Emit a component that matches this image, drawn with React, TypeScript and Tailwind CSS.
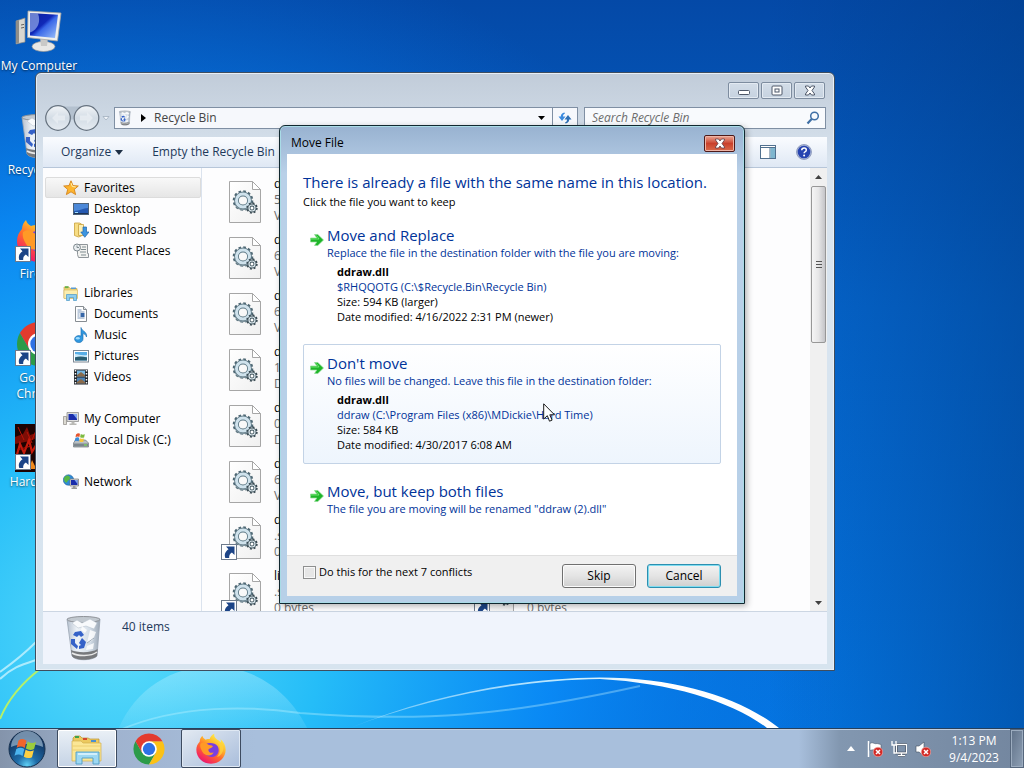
import type { ReactNode } from "react"

interface IconProps {
  className?: string
}

interface FileItem {
  name: string
  info: string
  detail: string
  shortcut?: boolean
  className: string
}

interface NavItem {
  label: string
  icon: ReactNode
}

interface NavGroup extends NavItem {
  active?: boolean
  items: NavItem[]
}

/* ---------- Icons ---------- */

function ComputerIcon({ className }: IconProps) {
  return (
    <svg viewBox="0 0 48 48" className={className} aria-hidden="true">
      <defs>
        <linearGradient id="pc-screen" x1="0" y1="0" x2="1" y2="1">
          <stop offset="0" stopColor="#0a1f9c" />
          <stop offset=".45" stopColor="#1028b8" />
          <stop offset=".55" stopColor="#3a68e8" />
          <stop offset="1" stopColor="#9fc4fb" />
        </linearGradient>
      </defs>
      <path d="M1 13l9-3v24l-9 2z" fill="#d9d7d0" stroke="#8d8b86" strokeWidth=".7" />
      <path d="M1 13l3-.8v22.600l-3 .8z" fill="#8f8d88" />
      <path d="M6 17l3-.6M6 20l3-.6" stroke="#66645f" />
      <ellipse cx="28.500" cy="38.500" rx="11.500" ry="5" fill="#e8e8e6" stroke="#9a9a98" strokeWidth=".7" />
      <path d="M25 29h8l-1 9h-6z" fill="#c9c9c7" />
      <path d="M13 3l33 2-3.500 28-30-3.500z" fill="#efefed" stroke="#a5a5a3" strokeWidth=".8" />
      <path d="M15 5l28 1.700-3 23.300-25-2.500z" fill="url(#pc-screen)" />
      <path d="M15 5l8 .5c3 8 0 16-8 19z" fill="#b8cdf8" opacity=".55" />
    </svg>
  )
}

function RecycleIcon({ className }: IconProps) {
  return (
    <svg viewBox="0 0 48 48" className={className} aria-hidden="true">
      <defs>
        <linearGradient id="bin-glass" x1="0" y1="0" x2="1" y2="0">
          <stop offset="0" stopColor="#b6c1cf" />
          <stop offset=".3" stopColor="#eef3f8" />
          <stop offset=".7" stopColor="#d3dde7" />
          <stop offset="1" stopColor="#9aa6b4" />
        </linearGradient>
      </defs>
      <path d="M7 5l5 37c3 5 20 5 25 0l3-37z" fill="url(#bin-glass)" stroke="#99a5b2" strokeWidth=".8" />
      <path d="M11 36l1 6c3 5 20 5 25 0l.6-7c-6 4-20 4-26.600 1z" fill="#77797c" />
      <path d="M12 39c6 3.500 19 3.500 25-1" stroke="#e8e8e8" strokeWidth="1.500" fill="none" />
      <ellipse cx="23.500" cy="5.500" rx="16.500" ry="3" fill="#c2c9d0" stroke="#8e9298" />
      <path d="M12 9l5-3 5 3 8-4 7 4-3 6-8-3-8 2z" fill="#f8fafc" stroke="#b1bcc8" strokeWidth=".5" />
      <path d="M30 16l6 2-3 8-6 3zM27 32l7-3-1 6-7 1zM22 12l5 4-2 3-4-3z" fill="#fff" opacity=".8" />
      <path d="M27 29l7-5" stroke="#8d9aaa" strokeWidth=".8" />
      <g fill="#3562c8">
        <path d="M15 18l6-1 3 4-3 2-2-2-2 2-4-2z" />
        <path d="M11 25l4 0v4l3 3-1 3-6-5z" />
        <path d="M22 24l4 4-2 6-5 1v-3l2-1-2-2z" />
      </g>
    </svg>
  )
}

function FirefoxIcon({ className }: IconProps) {
  return (
    <svg viewBox="0 0 48 48" className={className} aria-hidden="true">
      <defs>
        <linearGradient id="fox-body" x1=".8" y1=".1" x2=".2" y2="1">
          <stop offset="0" stopColor="#fff04a" />
          <stop offset=".3" stopColor="#ffb52a" />
          <stop offset=".55" stopColor="#ff6a2c" />
          <stop offset=".85" stopColor="#f5285f" />
          <stop offset="1" stopColor="#d3167a" />
        </linearGradient>
      </defs>
      <path
        d="M7 13c0-4 2-7 4-9 1 3 2 4 5 6 2-1 4-1 6-1 1-4 4-7 7-8-1 5 2 7 6 10 2 1 3 3 3 4 1-2 1-4 0-6 5 4 8 10 8 16 0 12-10 21-22 21S2 37 2 25c0-5 2-9 5-12z"
        fill="url(#fox-body)"
      />
      <path d="M16 17c4-3 14-3 18 3 4 7 0 16-9 16-7 0-11-5-11-10 0-4 1-7 2-9z" fill="#7a3fe0" />
      <path d="M8 16c4-3 8-2 11 1 2 2 6 1 8 3-2 3-6 3-7 5 0 4 4 6 8 4-3 7-13 6-17-1-2-4-4-7-3-12z" fill="#ff9a26" />
      <path d="M34 14c5 6 5 16-1 22 8-3 12-12 8-20-2-2-5-3-7-2z" fill="#ffd23c" opacity=".8" />
    </svg>
  )
}

function ChromeIcon({ className }: IconProps) {
  return (
    <svg viewBox="0 0 48 48" className={className} aria-hidden="true">
      <path d="M4.950 13A22 22 0 0 0 24 46L33.500 29.500 24 24 14.500 29.500z" fill="#2c9b48" />
      <path d="M43.050 13A22 22 0 0 1 24 46L33.500 29.500 24 13z" fill="#fbc116" />
      <path d="M24 13H43.050A22 22 0 0 0 4.950 13L14.500 29.500z" fill="#e33b2e" />
      <circle cx="24" cy="24" r="11" fill="#fff" />
      <circle cx="24" cy="24" r="8.700" fill="#2e71e5" />
    </svg>
  )
}

function HardTimeIcon({ className }: IconProps) {
  return (
    <svg viewBox="0 0 48 48" className={className} aria-hidden="true">
      <rect width="48" height="48" fill="#1d0302" />
      <path d="M0 13l8-3 4-7 3 8 9-3 8 4 16-6v8l-14 3-10-4-9 4-15 3z" fill="#7d0d05" />
      <path d="M1 34l4-14 4 9 5-13 3 12 6-10 4 13 6-15 5 14 8-9" stroke="#c41a0c" strokeWidth="2.200" fill="none" />
      <path d="M3 3l6 13M12 8l5 11M22 4l-5 12M2 26l14-4" stroke="#b81408" strokeWidth="1" />
      <path d="M14 45l3-9 3 6 3-9 4 10 4-7 3 9z" fill="#f08a1c" />
    </svg>
  )
}

function ShortcutArrow({ className }: IconProps) {
  return (
    <svg viewBox="0 0 16 16" className={className} aria-hidden="true">
      <rect x=".5" y=".5" width="15" height="15" fill="#fff" stroke="#6d7a8c" />
      <path d="M5 2.500h8.500V11l-2.600-2.400C8.800 10 8 11.500 8.200 14H4.300C3 10 4.500 7.500 7.500 5.300z" fill="#1c4487" />
    </svg>
  )
}

function DllIcon({ className }: IconProps) {
  return (
    <svg viewBox="0 0 48 48" className={className} aria-hidden="true">
      <defs>
        <linearGradient id="dll-page" x1="0" y1="0" x2="1" y2="1">
          <stop offset="0" stopColor="#fff" />
          <stop offset="1" stopColor="#f0f0f0" />
        </linearGradient>
      </defs>
      <path d="M8.500 3.500h23l8 8v33h-31z" fill="url(#dll-page)" stroke="#a6a6a6" />
      <path d="M31.500 3.500v8h8z" fill="#fff" stroke="#a6a6a6" />
      <circle cx="22" cy="22.500" r="8.800" fill="none" stroke="#4d6672" strokeWidth="3" strokeDasharray="2.500 2.110" />
      <circle cx="22" cy="22.500" r="6.500" fill="none" stroke="#5d7885" strokeWidth="4.800" />
      <circle cx="22" cy="22.500" r="6.500" fill="none" stroke="#cfe2ec" strokeWidth="3" />
      <path d="M14.500 27c3 6 12 6 15 0" stroke="#7d929c" strokeWidth="1.500" fill="none" />
      <circle cx="31" cy="30" r="4.600" fill="none" stroke="#37474f" strokeWidth="2.200" strokeDasharray="1.800 1.810" />
      <circle cx="31" cy="30" r="3" fill="#fff" stroke="#455962" strokeWidth="3" />
      <circle cx="31" cy="30" r="3" fill="none" stroke="#dbe7ec" strokeWidth="1.200" />
    </svg>
  )
}

function StarIcon() {
  return (
    <svg viewBox="0 0 16 16" className="size-4" aria-hidden="true">
      <path d="M8 .8l2 4.800 5.300.4-4 3.400 1.300 5.200L8 11.800l-4.600 2.800 1.300-5.200-4-3.400L6 5.600z" fill="#fdb52f" stroke="#d5831a" strokeWidth=".9" />
      <path d="M8 3l1.300 3.500 3.500.5" stroke="#fff1b0" strokeWidth="1" fill="none" />
    </svg>
  )
}

function DesktopIcon() {
  return (
    <svg viewBox="0 0 16 16" className="size-4" aria-hidden="true">
      <rect x=".5" y="2.500" width="15" height="11" fill="#2458b0" stroke="#4c6178" />
      <path d="M1 3h14v4c-5 0-8 3-14 3z" fill="#4c88d8" />
      <path d="M1 12h14v1H1z" fill="#1d3354" />
      <path d="M2 11.500h3" stroke="#9fe0ff" />
    </svg>
  )
}

function DownloadsIcon() {
  return (
    <svg viewBox="0 0 16 16" className="size-4" aria-hidden="true">
      <path d="M1.500 1h5l2 1v12l-3 1-4-1.500z" fill="#f7dd84" stroke="#c9a13e" strokeWidth=".8" />
      <path d="M5.500 2.500h5v11h-5z" fill="#fcefb4" stroke="#c9a13e" strokeWidth=".8" />
      <path d="M10 5h3.500v5H16l-4.200 5.300L7.800 10H10z" fill="#3d95e0" stroke="#1f65ae" strokeWidth=".7" />
    </svg>
  )
}

function RecentIcon() {
  return (
    <svg viewBox="0 0 16 16" className="size-4" aria-hidden="true">
      <path d="M4.500 1.500h10v9h1v4H5.500l-1-3z" fill="#f2f2f0" stroke="#8f959a" />
      <circle cx="4" cy="4.500" r="3.500" fill="#e9edf0" stroke="#7f898f" />
      <path d="M4 2.500v2h2M9 4h4M8 6.500h5M7 9h6M8 12h5" stroke="#7e8b90" fill="none" />
    </svg>
  )
}

function LibrariesIcon() {
  return (
    <svg viewBox="0 0 16 16" className="size-4" aria-hidden="true">
      <path d="M1 2h5l1 1.500h7V13H1z" fill="#f3d77a" stroke="#c2a044" strokeWidth=".6" />
      <path d="M2 1.200h3.500v2H2z" fill="#67b04a" />
      <path d="M8 2.500h5v1.500H8z" fill="#5a9ad2" />
      <path d="M1 5h13.500v8.500H1z" fill="#fceeaf" stroke="#d2b45c" strokeWidth=".6" />
      <path d="M3.500 15.500v-6h10v6h-3v-3h-4v3z" fill="#8ccdf0" stroke="#4a98c6" strokeWidth=".7" />
    </svg>
  )
}

function DocumentsIcon() {
  return (
    <svg viewBox="0 0 16 16" className="size-4" aria-hidden="true">
      <path d="M2.500.5h8l3 3v12h-11z" fill="#fff" stroke="#868c92" />
      <path d="M10.500.5v3h3" fill="#dfe4e8" stroke="#868c92" />
      <path d="M4.500 4h4M4.500 6h7M4.500 8h2M4.500 10h2M4.500 12h7" stroke="#7c97ba" />
      <rect x="7.500" y="7" width="4" height="4" fill="#3767a8" />
    </svg>
  )
}

function MusicIcon() {
  return (
    <svg viewBox="0 0 16 16" className="size-4" aria-hidden="true">
      <path d="M8 .5c.5 3.500 6.500 4 5.500 9.500-.6-2-2-3.200-3.500-3.400V12A4.200 3.500 0 1 1 8 9.100z" fill="#2f97df" stroke="#1a69ad" strokeWidth=".6" />
      <ellipse cx="4.800" cy="11.300" rx="2" ry="1.200" fill="#9fdcff" />
    </svg>
  )
}

function PicturesIcon() {
  return (
    <svg viewBox="0 0 16 16" className="size-4" aria-hidden="true">
      <rect x=".5" y="2.500" width="15" height="11.500" fill="#fff" stroke="#7c8894" />
      <path d="M2 4h12v8.500H2z" fill="#58aee6" />
      <path d="M2 6c4 0 6 2 12 1v2H2z" fill="#c9eafb" />
      <path d="M2 9.500c4-1.500 8-1 12 0v3H2z" fill="#2a5d70" />
    </svg>
  )
}

function VideosIcon() {
  return (
    <svg viewBox="0 0 16 16" className="size-4" aria-hidden="true">
      <rect x="1" y=".5" width="14" height="15" fill="#20252b" />
      <path d="M4 1.500h8v6H4z" fill="#76b7e2" />
      <path d="M4 8.500h8v6H4z" fill="#4d82b4" />
      <path d="M4 6l4-3 4 3v1.500H4zM4 13l4-3 4 3v1.500H4z" fill="#8a6a4a" />
      <path d="M2.500 1v14M13.500 1v14" stroke="#f3f6f8" strokeWidth="1.500" strokeDasharray="1.500 1.500" />
    </svg>
  )
}

function SmallComputerIcon() {
  return (
    <svg viewBox="0 0 16 16" className="size-4" aria-hidden="true">
      <path d="M.5 5.500h3v8h-3z" fill="#dcdad2" stroke="#8c8a84" strokeWidth=".7" />
      <path d="M4 1.500h11.500v9H4z" fill="#ddd" stroke="#8d8d8d" strokeWidth=".8" />
      <path d="M5.500 3h8.500v6H5.500z" fill="#1a2dab" />
      <path d="M10 3h4v5z" fill="#7ea4ef" />
      <path d="M8.500 10.500h3v2h2v1.500h-7v-1.500h2z" fill="#b9b9b5" />
    </svg>
  )
}

function DiskIcon() {
  return (
    <svg viewBox="0 0 16 16" className="size-4" aria-hidden="true">
      <path d="M.5 11l2-3h10l3 3v4H.5z" fill="#b9bfc3" stroke="#6f777c" strokeWidth=".7" />
      <path d="M1 11.500h14v3H1z" fill="#7c868c" />
      <path d="M11 13h3" stroke="#7cf04e" />
      <path d="M3 2.500Q5 .5 7 1.700L6.400 5Q4.500 4 2.500 5.300z" fill="#e5532c" />
      <path d="M7.800 2q2 1.200 4 .2l-.7 3.300q-2 .8-4-.3z" fill="#7cba3f" />
      <path d="M2.400 6q2-1.300 3.900-.2l-.7 3.400q-2-1-4 0z" fill="#3a8bd8" />
      <path d="M7.100 6.200q2 1.100 3.900.2l-.7 3.300q-2 .9-3.900-.2z" fill="#f9c63a" />
    </svg>
  )
}

function NetworkIcon() {
  return (
    <svg viewBox="0 0 16 16" className="size-4" aria-hidden="true">
      <circle cx="5.500" cy="6" r="5.200" fill="#2f8bd6" stroke="#1d5d9c" strokeWidth=".6" />
      <path d="M3 2c2-1 4 0 4 2S5 6 4 8 1 7 1 5s1-2.500 2-3z" fill="#57b845" />
      <path d="M7 5h8.500v7H7z" fill="#d8d8d8" stroke="#777" strokeWidth=".7" />
      <path d="M8 6h6.500v5H8z" fill="#1a2dab" />
      <path d="M11.500 6h3v4z" fill="#7ea4ef" />
      <path d="M10 12h2.500v1.500H14V15H8.500v-1.500H10z" fill="#9a9a98" />
    </svg>
  )
}

function GreenArrow() {
  return (
    <svg viewBox="0 0 14 14" className="mt-2 size-3.5 shrink-0" aria-hidden="true">
      <path d="M.5 5h6.300L4.500 1.500h3.300L13.500 7l-5.700 5.500H4.500L6.800 9H.5z" fill="#1fb52a" stroke="#8fdc93" strokeWidth=".7" />
      <path d="M1 6h8l-2.500-3.500" stroke="#7ff07f" strokeWidth=".8" fill="none" />
    </svg>
  )
}

function FolderStack() {
  return (
    <svg viewBox="0 0 32 32" className="size-8" aria-hidden="true">
      <path d="M2 5l2-2h5l2 2h6l2 1h9v21H2z" fill="#ecc95f" stroke="#bb9430" strokeWidth=".7" />
      <path d="M4 3h4v2H4z" fill="#3fa24a" />
      <path d="M12 5h4v2h-4z" fill="#d5482f" />
      <path d="M20 7h5v2h-5z" fill="#4a8fd0" />
      <path d="M1 8h9l2 2h18v18H1z" fill="#fbe796" stroke="#d3b04e" strokeWidth=".7" />
      <path d="M1 13h29M1 17h29" stroke="#eccf70" />
      <path d="M5 31V19h23v12h-6v-6H11v6z" fill="#9dd8f3" stroke="#4e9cc4" strokeWidth=".9" />
      <path d="M7 21h19" stroke="#e4f7ff" strokeWidth="1.500" />
    </svg>
  )
}

function StartOrb() {
  return (
    <svg viewBox="0 0 40 40" className="size-10" aria-hidden="true">
      <defs>
        <radialGradient id="orb" cx=".5" cy=".95" r=".8">
          <stop offset="0" stopColor="#5fd0f5" />
          <stop offset=".35" stopColor="#1e6ca8" />
          <stop offset="1" stopColor="#10305c" />
        </radialGradient>
      </defs>
      <circle cx="20" cy="20" r="18" fill="url(#orb)" stroke="#16304e" />
      <path d="M4 18a16 16 0 0 1 32 0c-8-4-24-4-32 0z" fill="#c3dcec" opacity=".55" />
      <path d="M11.500 11.500q4.200-3 8 .2l-1.800 7.300q-3.700-2.800-8-.3z" fill="#f0642c" />
      <path d="M20.700 12.400q4 2.800 8.300.5l-1.900 7q-4.200 2.200-8.200-.5z" fill="#9bcc3c" />
      <path d="M9.300 20q4-2.600 8-.1l-1.800 7q-3.900-2.500-8-.1z" fill="#4cb4ee" />
      <path d="M18.600 20.700q3.900 2.600 8.200.5l-1.800 7q-4.300 2-8.200-.5z" fill="#fdd043" />
    </svg>
  )
}

function RedBadge() {
  return (
    <>
      <circle cx="11" cy="11" r="4.800" fill="#d32a26" stroke="#f6b9b5" strokeWidth=".6" />
      <path d="M9 9l4 4m0-4l-4 4" stroke="#fff" strokeWidth="1.500" />
    </>
  )
}

function Wallpaper() {
  return (
    <svg
      viewBox="0 0 1024 768"
      preserveAspectRatio="none"
      className="absolute inset-0 size-full"
      aria-hidden="true"
    >
      <defs>
        <linearGradient id="sky" x1="0" y1="0" x2="0" y2="1">
          <stop offset="0" stopColor="#0449a7" />
          <stop offset=".4" stopColor="#0565cc" />
          <stop offset="1" stopColor="#0477e4" />
        </linearGradient>
        <radialGradient id="glow" gradientUnits="userSpaceOnUse" cx="120" cy="640" r="720">
          <stop offset="0" stopColor="#5adcfa" />
          <stop offset=".28" stopColor="#25bdf8" />
          <stop offset=".6" stopColor="#0a8cf8" stopOpacity=".85" />
          <stop offset="1" stopColor="#0668d8" stopOpacity="0" />
        </radialGradient>
        <linearGradient id="edge" x1="0" y1="0" x2="1" y2="0">
          <stop offset=".75" stopColor="#003c86" stopOpacity="0" />
          <stop offset="1" stopColor="#003c86" stopOpacity=".5" />
        </linearGradient>
        <linearGradient id="streak" x1="0" y1="0" x2="1" y2="0">
          <stop offset="0" stopColor="#fff" stopOpacity=".3" />
          <stop offset=".5" stopColor="#d5f6ff" stopOpacity=".9" />
          <stop offset=".7" stopColor="#fff" />
        </linearGradient>
        <linearGradient id="bubble" x1="0" y1="0" x2="0" y2="1">
          <stop offset="0" stopColor="#c2f3ff" stopOpacity=".4" />
          <stop offset="1" stopColor="#c2f3ff" stopOpacity=".1" />
        </linearGradient>
      </defs>
      <rect width="1024" height="768" fill="url(#sky)" />
      <rect width="1024" height="768" fill="url(#glow)" />
      <rect width="1024" height="768" fill="url(#edge)" />
      <path d="M118 730C150 650 265 640 308 730z" fill="url(#bubble)" />
      <path d="M120 730c60-26 130-24 180-17 120 9 200 4 340-27" stroke="#c9f5ff" strokeWidth="2" fill="none" opacity=".35" />
      <path d="M350 728C430 695 520 678 600 677.500C680 677.500 742 699 779 728H767C733 702 672 683 600 679C520 680 430 697 350 728z" fill="url(#streak)" />
      <path d="M0 679c12-12 24-15 36-19M0 672c14-10 24-18 36-30" stroke="#d9f8ff" strokeWidth="2" fill="none" opacity=".7" />
      <path d="M0 719c8-20 22-36 40-50" stroke="#b5f06a" strokeWidth="2" fill="none" />
    </svg>
  )
}

/* ---------- Data ---------- */

const desktopIcons = [
  { label: "My Computer", icon: <ComputerIcon className="size-12" /> },
  { label: "Recycle Bin", icon: <RecycleIcon className="size-12" /> },
  { label: "Firefox", icon: <FirefoxIcon className="size-12" />, shortcut: true },
  { label: "Google Chrome", icon: <ChromeIcon className="size-12" />, shortcut: true },
  { label: "Hard Time", icon: <HardTimeIcon className="size-12" />, shortcut: true },
]

const navGroups: NavGroup[] = [
  {
    label: "Favorites",
    icon: <StarIcon />,
    active: true,
    items: [
      { label: "Desktop", icon: <DesktopIcon /> },
      { label: "Downloads", icon: <DownloadsIcon /> },
      { label: "Recent Places", icon: <RecentIcon /> },
    ],
  },
  {
    label: "Libraries",
    icon: <LibrariesIcon />,
    items: [
      { label: "Documents", icon: <DocumentsIcon /> },
      { label: "Music", icon: <MusicIcon /> },
      { label: "Pictures", icon: <PicturesIcon /> },
      { label: "Videos", icon: <VideosIcon /> },
    ],
  },
  {
    label: "My Computer",
    icon: <SmallComputerIcon />,
    items: [{ label: "Local Disk (C:)", icon: <DiskIcon /> }],
  },
  { label: "Network", icon: <NetworkIcon />, items: [] },
]

const files: FileItem[] = [
  { name: "d", info: "5", detail: "V", className: "col-start-1" },
  { name: "d", info: "6", detail: "V", className: "col-start-1" },
  { name: "d", info: "6", detail: "V", className: "col-start-1" },
  { name: "d", info: "1", detail: "D", className: "col-start-1" },
  { name: "d", info: "0", detail: "D", className: "col-start-1" },
  { name: "d", info: "6", detail: "V", className: "col-start-1" },
  { name: "d", info: ".s", detail: "0", shortcut: true, className: "col-start-1" },
  { name: "li", info: ".s", detail: "0 bytes", shortcut: true, className: "col-start-1 row-start-8" },
  { name: "li", info: ".s", detail: "0 bytes", shortcut: true, className: "col-start-2 row-start-8" },
]

const choices = [
  {
    title: "Move and Replace",
    text: "Replace the file in the destination folder with the file you are moving:",
    file: "ddraw.dll",
    path: "$RHQQOTG (C:\\$Recycle.Bin\\Recycle Bin)",
    size: "Size: 594 KB (larger)",
    date: "Date modified: 4/16/2022 2:31 PM (newer)",
  },
  {
    title: "Don't move",
    text: "No files will be changed. Leave this file in the destination folder:",
    file: "ddraw.dll",
    path: "ddraw (C:\\Program Files (x86)\\MDickie\\Hard Time)",
    size: "Size: 584 KB",
    date: "Date modified: 4/30/2017 6:08 AM",
    hovered: true,
  },
  {
    title: "Move, but keep both files",
    text: 'The file you are moving will be renamed "ddraw (2).dll"',
  },
]

/* ---------- Explorer window ---------- */

function CaptionButton({ label, children }: { label: string; children: ReactNode }) {
  return (
    <button
      type="button"
      aria-label={label}
      className="flex h-[17px] w-[31px] items-center justify-center rounded-xs border border-[#7d8c9f] bg-linear-to-b from-[#d3dde8] to-[#c6d2e0] shadow-[inset_0_0_0_1px_#e3eaf2]"
    >
      <svg viewBox="0 0 14 11" className="h-[11px] w-3.5" fill="#fff" stroke="#4d5768" aria-hidden="true">
        {children}
      </svg>
    </button>
  )
}

function NavigationPane() {
  return (
    <nav className="w-[159px] shrink-0 border-r border-[#dbe3ee] pt-[9px] pl-0.5">
      {navGroups.map((group) => (
        <div key={group.label} className="mb-[21px]">
          <a
            href="#"
            className={
              group.active
                ? "flex h-[21px] items-center gap-[5px] rounded-xs border border-[#dcdcdc] bg-linear-to-b from-[#f8f8f8] to-[#e6e6e6] pl-[17px]"
                : "flex h-[21px] items-center gap-[5px] pl-[18px]"
            }
          >
            {group.icon}
            {group.label}
          </a>
          {group.items.map((item) => (
            <a key={item.label} href="#" className="flex h-[21px] items-center gap-[5px] pl-7">
              {item.icon}
              {item.label}
            </a>
          ))}
        </div>
      ))}
    </nav>
  )
}

function FileList() {
  return (
    <div className="grid flex-1 auto-rows-[56px] grid-cols-[253px_253px] overflow-hidden pt-2 pl-[19px]">
      {files.map((file, index) => (
        <div key={index} className={`flex gap-[5px] leading-4 ${file.className}`}>
          <div className="relative mt-0.5 size-12 shrink-0">
            <DllIcon className="size-12" />
            {file.shortcut && <ShortcutArrow className="absolute bottom-0.5 left-0 size-4" />}
          </div>
          <div>
            <p>{file.name}</p>
            <p className="text-[#6d6d6d]">{file.info}</p>
            <p className="text-[#6d6d6d]">{file.detail}</p>
          </div>
        </div>
      ))}
    </div>
  )
}

function ScrollBar() {
  return (
    <div className="flex w-[17px] shrink-0 flex-col items-center bg-[#f0f0f0]">
      <button type="button" aria-label="Scroll up" className="flex h-[18px] w-full items-center justify-center">
        <svg viewBox="0 0 7 4" className="h-1 w-[7px]" aria-hidden="true">
          <path d="M0 4L3.500 0 7 4z" fill="#404040" />
        </svg>
      </button>
      <div className="flex h-[157px] w-[15px] flex-col items-center justify-center gap-0.5 rounded-xs border border-[#979797] bg-linear-to-r from-[#f5f5f5] via-[#e6e6e7] to-[#c4c4c8]">
        <span className="h-px w-1.5 bg-[#555]" />
        <span className="h-px w-1.5 bg-[#555]" />
        <span className="h-px w-1.5 bg-[#555]" />
      </div>
      <button type="button" aria-label="Scroll down" className="mt-auto flex h-4 w-full items-center justify-center">
        <svg viewBox="0 0 7 4" className="h-1 w-[7px]" aria-hidden="true">
          <path d="M0 0h7L3.500 4z" fill="#404040" />
        </svg>
      </button>
    </div>
  )
}

function ExplorerWindow() {
  return (
    <section className="absolute top-[72px] left-[35px] flex h-[599px] w-[800px] flex-col rounded-t-md border border-[#3f4d5e] bg-linear-to-b from-[#c1ccd9] via-[#d9e4ef] via-15% to-[#d7e4ef] px-[7px] pb-1.5 shadow-[inset_0_0_0_1px_#e8eff6]">
      <div className="flex h-[34px] justify-end gap-0.5 pt-[9px] pr-0.5">
        <CaptionButton label="Minimize">
          <rect x="1.500" y="5.500" width="11" height="4" rx="1" />
        </CaptionButton>
        <CaptionButton label="Maximize">
          <rect x="2" y="1" width="10" height="9" rx="1" />
          <rect x="5" y="4" width="4" height="3" />
        </CaptionButton>
        <CaptionButton label="Close">
          <path d="M2.500 1h3L7 3l1.500-2h3v1L9 5.500 11.500 9v1h-3L7 8l-1.500 2h-3V9L5 5.500 2.500 2z" />
        </CaptionButton>
      </div>

      {/* Address bar */}
      <div className="flex h-[22px] items-center">
        <svg viewBox="0 0 71 28" className="h-7 w-[71px] shrink-0" aria-label="Back and forward">
          <defs>
            <linearGradient id="nav-btn" x1="0" y1="0" x2="0" y2="1">
              <stop offset="0" stopColor="#f2f5f8" />
              <stop offset=".5" stopColor="#d3dce5" />
              <stop offset="1" stopColor="#e6ecf2" />
            </linearGradient>
          </defs>
          <path d="M15 2.500h29v17q-14-8-29 0z" fill="#b4c1cf" />
          <circle cx="15" cy="14" r="12.300" fill="url(#nav-btn)" stroke="#66727f" strokeWidth="1.200" />
          <circle cx="43.500" cy="14" r="12.300" fill="url(#nav-btn)" stroke="#66727f" strokeWidth="1.200" />
          <path d="M9 14l6-6v3.500h7v5h-7V20zM50 14l-6-6v3.500h-7v5h7V20z" fill="#e9eef3" opacity=".8" />
          <path d="M60 12.500h6l-3 3.500z" fill="#f3f7fb" stroke="#9aa8b8" strokeWidth=".7" />
        </svg>
        <div className="flex h-[22px] flex-1 items-center border border-[#7f8fa3] bg-[#f6f8fc]">
          <RecycleIcon className="ml-0.5 size-4" />
          <svg viewBox="0 0 5 8" className="ml-2 h-2 w-[5px]" aria-hidden="true">
            <path d="M0 0l5 4-5 4z" fill="#000" />
          </svg>
          <span className="ml-2 text-[#444]">Recycle Bin</span>
          <button type="button" aria-label="Previous locations" className="ml-auto flex h-full w-[21px] items-center justify-center">
            <svg viewBox="0 0 7 4" className="h-1 w-[7px]" aria-hidden="true">
              <path d="M0 0h7L3.500 4z" fill="#000" />
            </svg>
          </button>
          <button type="button" aria-label="Refresh" className="flex h-full w-[25px] items-center justify-center border-l border-[#7f8fa3]">
            <svg viewBox="0 0 14 14" className="size-3.5" fill="#3b8ade" aria-hidden="true">
              <path d="M6.500 1.500C4 2 2.800 3.500 2.800 5.500H.5L4 10l3.500-4.500H5c0-1.500.5-2.500 2-3z" />
              <path d="M7.500 12.500c2.500-.5 3.700-2 3.700-4h2.300L10 4 6.500 8.500H9c0 1.500-.5 2.500-2 3z" fill="#2e6fb4" />
            </svg>
          </button>
        </div>
        <label className="mr-px ml-1.5 flex h-[22px] w-[242px] shrink-0 items-center border border-[#7f8fa3] bg-[#f8fafd] px-[7px]">
          <input
            type="text"
            aria-label="Search Recycle Bin"
            placeholder="Search Recycle Bin"
            className="min-w-0 flex-1 italic outline-none placeholder:text-[#6d6d6d]"
          />
          <svg viewBox="0 0 14 14" className="-mr-0.5 size-3.5" fill="none" aria-hidden="true">
            <circle cx="8.500" cy="5" r="3.800" stroke="#3f6fa5" strokeWidth="1.500" />
            <path d="M5.700 8L1.500 12.500" stroke="#3f6fa5" strokeWidth="2.200" />
          </svg>
        </label>
      </div>

      {/* Command bar */}
      <div className="mt-2 flex h-[31px] shrink-0 items-center border-b border-[#b7c6d9] bg-linear-to-b from-[#fafcff] to-[#dfe8f4] pl-[18px] text-[#1e395b]">
        <button type="button" className="flex items-center gap-1">
          Organize
          <svg viewBox="0 0 8 5" className="h-[5px] w-2" aria-hidden="true">
            <path d="M0 0h8L4 5z" fill="#1e2f45" />
          </svg>
        </button>
        <button type="button" className="ml-[29px]">
          Empty the Recycle Bin
        </button>
        <button type="button" aria-label="Show the preview pane" className="ml-auto">
          <svg viewBox="0 0 16 14" className="h-3.5 w-4" aria-hidden="true">
            <rect x=".5" y=".5" width="15" height="13" fill="#fff" stroke="#50708f" />
            <path d="M1 2.500h14M10 3v11" stroke="#50708f" />
            <rect x="10.500" y="3" width="4.500" height="10" fill="#7fb6cf" />
          </svg>
        </button>
        <button type="button" aria-label="Get help" className="mr-[15px] ml-5">
          <svg viewBox="0 0 16 16" className="size-4" aria-hidden="true">
            <circle cx="8" cy="8" r="7.500" fill="#a9b5d6" stroke="#7b89b0" strokeWidth=".7" />
            <circle cx="8" cy="8" r="6.300" fill="#2744b0" />
            <path d="M5.700 6.200q.2-2.200 2.400-2.200 2.200 0 2.200 1.900 0 1.200-1.300 1.900-.9.500-.9 1.500" fill="none" stroke="#fff" strokeWidth="1.500" />
            <circle cx="8.100" cy="11.500" r="1" fill="#fff" />
          </svg>
        </button>
      </div>

      <div className="flex min-h-0 flex-1 overflow-hidden bg-[#fdfdfe]">
        <NavigationPane />
        <FileList />
        <ScrollBar />
      </div>

      {/* Details pane */}
      <div className="flex h-[53px] shrink-0 border-t border-[#ccd6e3] bg-[#f0f4fc] pl-[17px] text-[#1e395b]">
        <RecycleIcon className="mt-0.5 size-12" />
        <p className="mt-[7px] ml-3.5">40 items</p>
      </div>
    </section>
  )
}

/* ---------- Move File dialog ---------- */

function MoveFileDialog() {
  return (
    <section
      role="dialog"
      aria-labelledby="dialog-title"
      className="absolute top-[125px] left-[279px] flex h-[479px] w-[466px] flex-col rounded-t-md border border-[#10272f] bg-linear-to-b from-[#98b2d0] via-[#b9d0e8] via-10% to-[#b7d0e8] px-[7px] pb-[7px] shadow-[inset_0_0_0_1px_#a9dbe6,2px_2px_6px_rgba(0,0,0,0.3)]"
    >
      <header className="flex h-7 shrink-0 items-center justify-between pt-1.5 pr-0.5 pl-1">
        <h1 id="dialog-title">Move File</h1>
        <button
          type="button"
          aria-label="Close"
          className="flex h-[17px] w-[31px] items-center justify-center rounded-xs border border-[#4e1a1a] bg-linear-to-b from-[#e9a595] via-[#c9402c] via-50% to-[#d9694a] shadow-[inset_0_0_0_1px_#eeb4a6]"
        >
          <svg viewBox="0 0 14 11" className="h-[11px] w-3.5" aria-hidden="true">
            <path d="M2.500 1h3L7 3l1.500-2h3v1L9 5.500 11.500 9v1h-3L7 8l-1.500 2h-3V9L5 5.500 2.500 2z" fill="#fff" stroke="#5b3a44" strokeWidth=".8" />
          </svg>
        </button>
      </header>

      <div className="flex-1 bg-white px-4 pt-[18px] text-[11px]">
        <h2 className="text-[15px] leading-5 text-[#003399]">There is already a file with the same name in this location.</h2>
        <p className="mt-0.5 leading-4">Click the file you want to keep</p>
        <div className="mt-1.5 flex flex-col gap-2">
          {choices.map((choice) => (
            <button
              key={choice.title}
              type="button"
              className={
                choice.hovered
                  ? "flex h-[120px] gap-[3px] rounded-xs border border-[#c3d3e6] bg-linear-to-b from-white to-[#eef5fd] px-1.5 pt-2 text-left leading-[15px]"
                  : "flex h-[120px] gap-[3px] border border-transparent px-1.5 pt-2 text-left leading-[15px] last:h-[60px]"
              }
            >
              <GreenArrow />
              <span className="block">
                <span className="block text-[15px] leading-5 text-[#003399]">{choice.title}</span>
                <span className="block text-[#003399]">{choice.text}</span>
                {choice.file && (
                  <span className="mt-1 block pl-2.5">
                    <span className="block font-bold">{choice.file}</span>
                    <span className="block text-[#003399]">{choice.path}</span>
                    <span className="block">{choice.size}</span>
                    <span className="block">{choice.date}</span>
                  </span>
                )}
              </span>
            </button>
          ))}
        </div>
      </div>

      <footer className="flex h-[41px] shrink-0 items-center border-t border-[#dfdfdf] bg-[#f0f0f0] px-4">
        <label className="mb-2 flex items-center gap-[3px] text-[11px]">
          <input
            type="checkbox"
            className="size-[13px] appearance-none border border-[#8e8f8f] bg-[#e6e6e6] shadow-[inset_0_0_0_1px_#f8f8f8]"
          />
          Do this for the next 7 conflicts
        </label>
        <button
          type="button"
          className="ml-auto h-6 w-[74px] rounded-[3px] border border-[#707070] bg-linear-to-b from-[#f3f3f3] via-[#e4e4e4] via-50% to-[#cfcfcf] shadow-[inset_0_0_0_1px_#fbfbfb]"
        >
          Skip
        </button>
        <button
          type="button"
          className="ml-[11px] h-6 w-[74px] rounded-[3px] border border-[#2c8fb0] bg-linear-to-b from-[#f3f3f3] via-[#e4e4e4] via-50% to-[#cfcfcf] shadow-[inset_0_0_0_1px_#7fdcf0]"
        >
          Cancel
        </button>
      </footer>
    </section>
  )
}

/* ---------- Taskbar ---------- */

function Taskbar() {
  return (
    <footer className="relative flex h-10 shrink-0 items-center border-t border-[#27405c] bg-[linear-gradient(to_right,#8494ab,#9fb2ce_10%,#a8bfdc_25%,#a8bfdc_78%,#8297b0_82%,#73869f)] shadow-[inset_0_1px_0_#c0cee0]">
      <button type="button" aria-label="Start" className="ml-[7px]">
        <StartOrb />
      </button>
      <button
        type="button"
        aria-label="Windows Explorer"
        className="ml-2.5 flex h-full w-[60px] items-center justify-center rounded-xs border border-[#3d4b60] bg-linear-to-b from-[#eaf0f6] to-[#c5d3e5] shadow-[inset_0_0_0_1px_#fff]"
      >
        <FolderStack />
      </button>
      <button type="button" aria-label="Google Chrome" className="flex h-full w-16 items-center justify-center">
        <ChromeIcon className="size-[34px]" />
      </button>
      <button
        type="button"
        aria-label="Firefox"
        className="flex h-full w-[60px] items-center justify-center rounded-xs border border-[#3d4b60] bg-linear-to-br from-[#e3eaf2] to-[#a9bddb] shadow-[inset_0_0_0_1px_#dfe8f3]"
      >
        <FirefoxIcon className="size-8" />
      </button>

      <div className="ml-auto flex h-full items-center gap-2 text-white">
        <button type="button" aria-label="Show hidden icons" className="mr-1">
          <svg viewBox="0 0 8 5" className="h-[5px] w-2" aria-hidden="true">
            <path d="M0 5l4-5 4 5z" fill="#fff" />
          </svg>
        </button>
        <svg viewBox="0 0 16 16" className="size-4" aria-label="Action Center">
          <path d="M1.500 0v16" stroke="#fff" strokeWidth="1.500" />
          <path d="M3 2.500c3-2 4 1 7 0l4 1v6c-4 1-6-2-11 0z" fill="#fff" stroke="#3f4d60" strokeWidth=".5" />
          <RedBadge />
        </svg>
        <svg viewBox="0 0 16 16" className="size-4" fill="none" aria-label="Network">
          <path d="M5.500 3.500h10v8.500h-10zM10.500 12v2.500M7 14.500h7" stroke="#2d3a4c" strokeWidth="2.500" />
          <path d="M5.500 3.500h10v8.500h-10zM10.500 12v2.500M7 14.500h7" stroke="#fff" strokeWidth="1.300" />
          <path d="M1 0v4h4V0M3 4v8h2" stroke="#fff" strokeWidth="1.300" />
        </svg>
        <svg viewBox="0 0 16 16" className="size-4" aria-label="Volume muted">
          <path d="M1 5h3l5-4v14l-5-4H1z" fill="#fff" stroke="#3f4d60" strokeWidth=".6" />
          <RedBadge />
        </svg>
        <div className="ml-[7px] w-14 text-center leading-[17px]">
          <p>1:13 PM</p>
          <p>9/4/2023</p>
        </div>
        <button
          type="button"
          aria-label="Show desktop"
          className="h-full w-3.5 border border-[#56677d] bg-linear-to-br from-[#5f7188] to-[#8fa0b5] shadow-[inset_0_0_0_1px_#9cacbf]"
        />
      </div>
    </footer>
  )
}

export default function App() {
  return (
    <div className="relative flex h-screen flex-col overflow-hidden bg-[#0565cc] font-['Open_Sans','Noto_Sans',sans-serif] text-xs text-black">
      <Wallpaper />
      <main className="relative min-h-0 flex-1">
        <div className="flex w-[78px] flex-col">
          {desktopIcons.map((item) => (
            <a key={item.label} href="#" className="flex h-[104px] flex-col items-center pt-2 text-center text-white">
              <span className="relative">
                {item.icon}
                {item.shortcut && <ShortcutArrow className="absolute bottom-0.5 left-0 size-4" />}
              </span>
              <span className="mt-0.5 leading-4 text-shadow-[0_1px_2px_rgb(0_0_0/0.6)]">{item.label}</span>
            </a>
          ))}
        </div>
        <ExplorerWindow />
        <MoveFileDialog />
        <svg viewBox="0 0 12 19" className="absolute top-[403px] left-[543px] h-[19px] w-3" aria-hidden="true">
          <path d="M.7.8v15.300l3.600-3.400 2.200 5.500 2.600-1.100-2.300-5.300h4.700z" fill="#fff" stroke="#000" strokeWidth=".9" />
        </svg>
      </main>
      <Taskbar />
    </div>
  )
}
